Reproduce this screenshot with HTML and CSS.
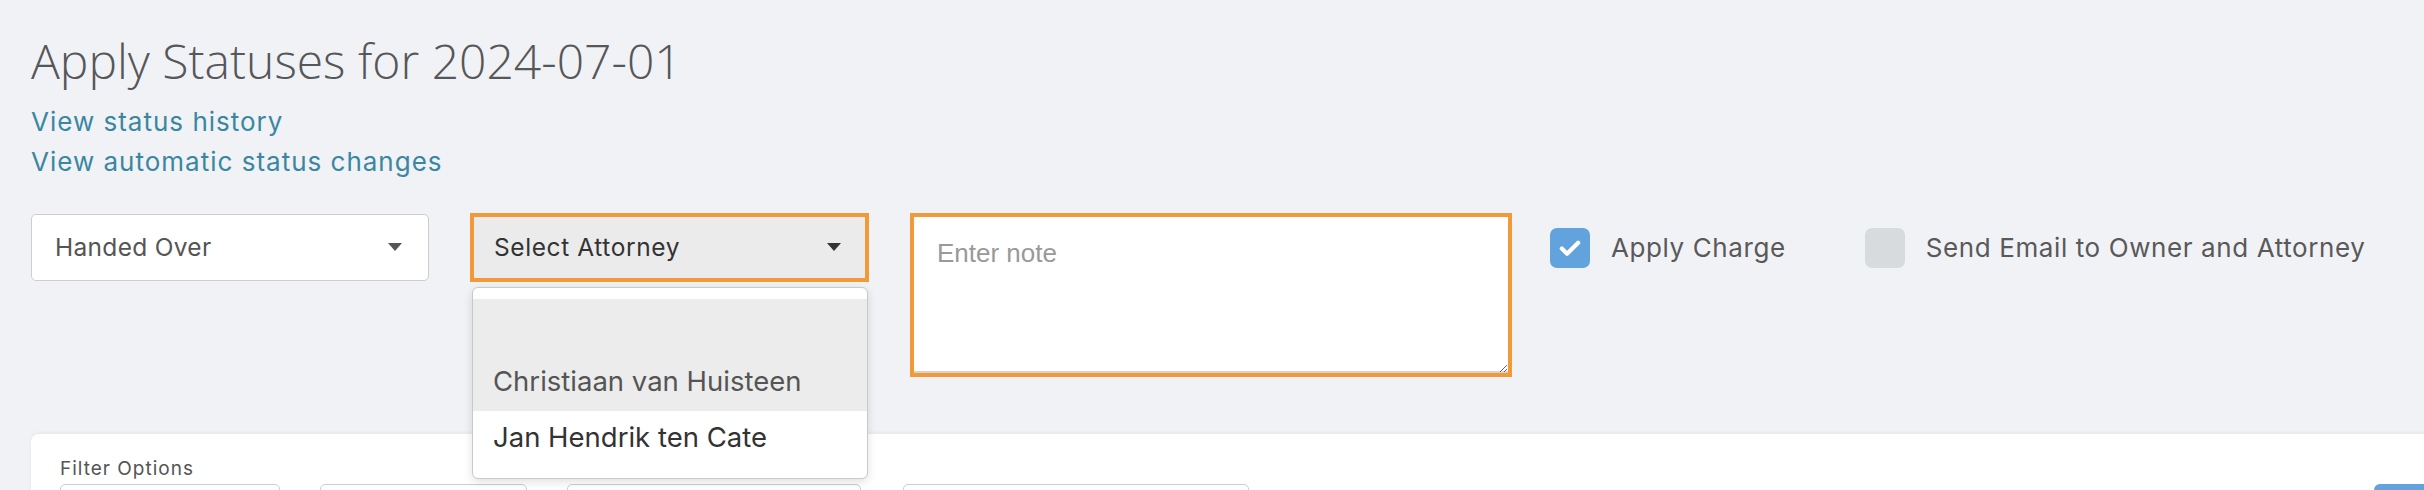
FILE: index.html
```html
<!DOCTYPE html>
<html lang="en">
<head>
<meta charset="utf-8">
<title>Apply Statuses</title>
<link rel="stylesheet" href="styles.css">
</head>
<body>
<div class="page">
  <h1 class="title">Apply Statuses for 2024-07-01</h1>
  <a class="link" href="#">View status history</a>
  <a class="link" href="#">View automatic status changes</a>

  <div class="controls">
    <div class="select">
      <span class="select-text">Handed Over</span>
      <span class="caret"></span>
    </div>

    <div class="select-wrap">
      <div class="select select-open">
        <span class="select-text">Select Attorney</span>
        <span class="caret caret-dark"></span>
      </div>
      <ul class="dropdown">
        <li class="option option-hl"></li>
        <li class="option option-hl option-muted">Christiaan van Huisteen</li>
        <li class="option">Jan Hendrik ten Cate</li>
      </ul>
    </div>

    <textarea class="note" placeholder="Enter note"></textarea>

    <label class="check">
      <span class="box box-on">
        <svg viewBox="0 0 24 24" width="28" height="28"><path d="M5 12.5l4.5 4.5L19 7.5" fill="none" stroke="#fff" stroke-width="3.6" stroke-linecap="round" stroke-linejoin="round"/></svg>
      </span>
      <span class="check-label">Apply Charge</span>
    </label>

    <label class="check check-second">
      <span class="box box-off"></span>
      <span class="check-label">Send Email to Owner and Attorney</span>
    </label>
  </div>

  <div class="card">
    <div class="card-title">Filter Options</div>
    <div class="filters">
      <div class="field f1"></div>
      <div class="field f2"></div>
      <div class="field f3"></div>
      <div class="field f4"></div>
      <div class="btn"></div>
    </div>
  </div>
</div>
</body>
</html>
```
FILE: styles.css
```css
html, body {
  margin: 0;
  padding: 0;
  height: 490px;
  overflow: hidden;
  background: #f1f2f6;
}

.page {
  padding: 32px 0 0 31px;
  font-family: Inter, "Noto Sans", sans-serif;
}

.title {
  margin: 0 0 12px 0;
  font-family: "Open Sans", sans-serif;
  font-weight: 300;
  font-size: 48px;
  line-height: 57.6px;
  color: #555759;
}

.link {
  display: block;
  width: max-content;
  font-size: 26px;
  letter-spacing: 1px;
  line-height: 40px;
  color: #3a87a1;
  text-decoration: none;
}

.controls {
  display: flex;
  align-items: flex-start;
  margin-top: 31px;
}

.select {
  box-sizing: border-box;
  width: 398px;
  height: 67px;
  margin-top: 1px;
  display: flex;
  align-items: center;
  justify-content: space-between;
  padding: 0 26px 0 23px;
  background: #fff;
  border: 1.5px solid #cdcdcd;
  border-radius: 5px;
}

.select-text {
  font-size: 24.5px;
  letter-spacing: 0.3px;
  color: #555;
}

.caret {
  width: 0;
  height: 0;
  border-left: 7.5px solid transparent;
  border-right: 7.5px solid transparent;
  border-top: 8px solid #555;
}

.caret-dark {
  border-top-color: #333;
}

.select-wrap {
  position: relative;
  margin-left: 41px;
}

.select-open {
  width: 399px;
  height: 69px;
  margin-top: 0;
  padding: 0 24px 0 20px;
  background: #ebebeb;
  border: 4px solid #f39a38;
  border-radius: 0;
}

.select-open .select-text {
  color: #333;
  letter-spacing: 0.6px;
}

.dropdown {
  position: absolute;
  top: 74px;
  left: 2px;
  right: 1px;
  margin: 0;
  padding: 11px 0;
  list-style: none;
  background: #fff;
  border: 1px solid #c9c9c9;
  border-radius: 6px;
  box-shadow: 0 3px 10px rgba(0, 0, 0, 0.12);
}

.option {
  box-sizing: border-box;
  height: 56px;
  line-height: 52px;
  padding: 0 0 0 20px;
  font-size: 27.5px;
  color: #333;
  white-space: nowrap;
}

.option-hl {
  background: #ececec;
}

.option-muted {
  color: #555;
}

.note {
  box-sizing: border-box;
  width: 602px;
  height: 164px;
  margin: 0 0 0 41px;
  padding: 21px 23px;
  border: 4px solid #f39a38;
  border-radius: 0;
  background: #fff;
  box-shadow: inset 0 -2px 0 #d4d4d4;
  font-family: "Liberation Sans", Arial, sans-serif;
  font-size: 26px;
  color: #333;
  outline: none;
  resize: both;
}

.note::placeholder {
  color: #999;
}

.check {
  display: flex;
  align-items: center;
  height: 69px;
  margin-left: 38px;
}

.check-second {
  margin-left: 79px;
}

.box {
  box-sizing: border-box;
  width: 40px;
  height: 40px;
  border-radius: 7px;
  display: flex;
  align-items: center;
  justify-content: center;
  margin-top: 2px;
}

.box-on {
  background: #62a2dd;
}

.box-off {
  background: #d8dbde;
}

.check-label {
  margin-left: 21px;
  font-size: 26px;
  letter-spacing: 0.6px;
  color: #595959;
}

.card {
  margin: 57px -20px 0 0;
  padding: 24px 0 0 29px;
  height: 80px;
  background: #fff;
  border-radius: 8px 0 0 0;
  box-shadow: 0 -1px 4px rgba(0, 0, 0, 0.06);
}

.card-title {
  font-size: 19px;
  letter-spacing: 1px;
  line-height: 22px;
  color: #555;
}

.filters {
  display: flex;
  margin-top: 4px;
}

.field {
  box-sizing: border-box;
  height: 50px;
  border: 1.5px solid #cdcdcd;
  border-radius: 5px;
  background: #fff;
}

.f1 { width: 220px; }
.f2 { width: 207px; margin-left: 40px; }
.f3 { width: 294px; margin-left: 40px; }
.f4 { width: 346px; margin-left: 42px; }

.btn {
  width: 70px;
  height: 50px;
  margin-left: auto;
  background: #62a2dd;
  border-radius: 6px 0 0 0;
}
```
